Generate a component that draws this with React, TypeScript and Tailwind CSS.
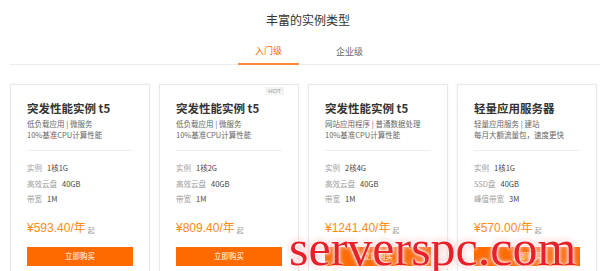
import React from "react";

type Plan = {
  name: string;
  desc: string[];
  specs: [string, string][];
  price: string;
  hot?: boolean;
};

const plans: Plan[] = [
  {
    name: "突发性能实例 t5",
    desc: ["低负载应用 | 微服务", "10%基准CPU计算性能"],
    specs: [
      ["实例", "1核1G"],
      ["高效云盘", "40GB"],
      ["带宽", "1M"],
    ],
    price: "¥593.40/年",
  },
  {
    name: "突发性能实例 t5",
    desc: ["低负载应用 | 微服务", "10%基准CPU计算性能"],
    specs: [
      ["实例", "1核2G"],
      ["高效云盘", "40GB"],
      ["带宽", "1M"],
    ],
    price: "¥809.40/年",
    hot: true,
  },
  {
    name: "突发性能实例 t5",
    desc: ["网站应用程序 | 普通数据处理", "10%基准CPU计算性能"],
    specs: [
      ["实例", "2核4G"],
      ["高效云盘", "40GB"],
      ["带宽", "1M"],
    ],
    price: "¥1241.40/年",
  },
  {
    name: "轻量应用服务器",
    desc: ["轻量应用服务 | 建站", "每月大额流量包，速度更快"],
    specs: [
      ["实例", "1核1G"],
      ["SSD盘", "40GB"],
      ["峰值带宽", "3M"],
    ],
    price: "¥570.00/年",
  },
];

function PlanCard({ plan }: { plan: Plan }) {
  return (
    <div className="relative h-[200px] border border-[#e8e8e8] bg-white px-[16px] pt-[16px] shadow-[0_0_2px_rgba(0,0,0,0.06)]">
      {plan.hot && (
        <span className="absolute right-[14px] top-[2px] bg-[#f3f3f3] px-[3px] text-[6px] leading-[8px] text-[#9a9a9a] font-['Liberation_Sans',sans-serif]">
          HOT
        </span>
      )}
      <h3 className="text-[11.5px] font-semibold leading-[14px] text-[#333]">{plan.name}</h3>
      <div className="mt-[3px] text-[7.5px] leading-[11px] text-[#666]">
        {plan.desc.map((d) => (
          <p key={d}>{d}</p>
        ))}
      </div>
      <div className="mt-[10px] h-px bg-[#eeeeee]" />
      <div className="mt-[9px]">
        {plan.specs.map(([label, value]) => (
          <div key={label} className="flex h-[15.5px] items-center text-[7.5px]">
            <span className="text-[#a0a0a0]">{label}</span>
            <span className="ml-[5px] text-[#444]">{value}</span>
          </div>
        ))}
      </div>
      <div className="mt-[13px] flex items-end leading-[16px]">
        <span className="text-[12px] text-[#ff8a14] font-['Liberation_Sans','Noto_Sans_CJK_SC',sans-serif]">
          {plan.price}
        </span>
        <span className="ml-[2px] text-[7px] leading-[12px] text-[#999]">起</span>
      </div>
      <button className="mt-[11px] flex h-[19px] w-full items-center justify-center bg-[#ff6a00] text-[7.5px] text-white">
        立即购买
      </button>
    </div>
  );
}

export default function App() {
  return (
    <div className="relative h-[271px] w-[600px] overflow-hidden bg-white font-['Noto_Sans_CJK_SC',sans-serif]">
      <h2 className="pt-[12px] text-center text-[12px] leading-[16px] text-[#333] pl-[16px]">
        丰富的实例类型
      </h2>

      <div className="ml-[10px] mt-[11px] flex border-b border-[#ebebeb] pl-[228px]">
        <div className="-mb-px flex h-[26px] w-[61px] items-center justify-center border-b-2 border-[#ff8a3d] text-[9px] text-[#ff6a00]">
          入门级
        </div>
        <div className="-mb-px ml-[20px] flex h-[26px] w-[61px] items-center justify-center text-[9px] text-[#666]">
          企业级
        </div>
      </div>

      <div className="mt-[19px] grid grid-cols-4 gap-[9px] pl-[10px] pr-[3px]">
        {plans.map((p, i) => (
          <PlanCard key={i} plan={p} />
        ))}
      </div>

      <div className="absolute left-[289px] top-[223px] text-[50px] leading-[50px] text-[#e8202a] font-['Liberation_Serif',serif] [text-shadow:0_0_2px_#fff,0_0_2px_#fff,0_0_4px_#fff,0_0_7px_#ff9a9a]">
        serverspc.com
      </div>
    </div>
  );
}
